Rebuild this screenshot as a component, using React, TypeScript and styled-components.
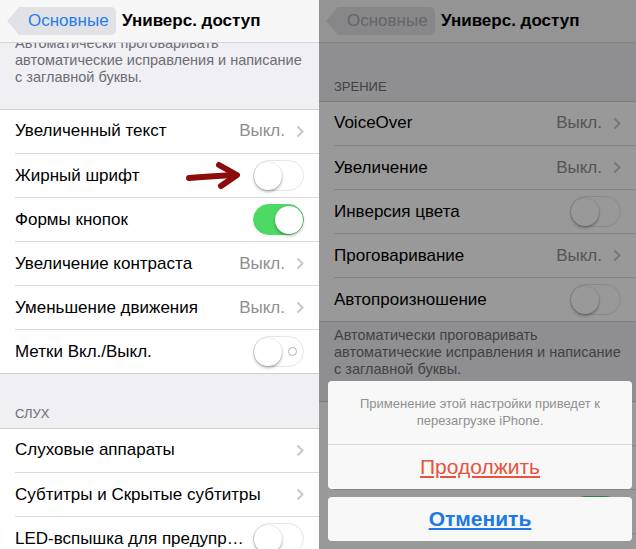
import React from 'react'
import styled, { createGlobalStyle } from 'styled-components'

const GlobalStyle = createGlobalStyle`
  html, body {
    margin: 0;
    padding: 0;
    background: #ffffff;
  }
  body {
    font-family: "Liberation Sans", Arial, sans-serif;
  }
`

type Cell =
  | { label: string; kind: 'detail'; value?: string }
  | { label: string; kind: 'toggle'; on?: boolean; labels?: boolean; arrow?: boolean }

interface Section {
  header?: string
  headerTop?: number
  cells: Cell[]
  footer?: string[]
}

const sections: Section[] = [
  {
    header: 'ЗРЕНИЕ',
    headerTop: 36,
    cells: [
      { label: 'VoiceOver', kind: 'detail', value: 'Выкл.' },
      { label: 'Увеличение', kind: 'detail', value: 'Выкл.' },
      { label: 'Инверсия цвета', kind: 'toggle' },
      { label: 'Проговаривание', kind: 'detail', value: 'Выкл.' },
      { label: 'Автопроизношение', kind: 'toggle' },
    ],
    footer: ['Автоматически проговаривать', 'автоматические исправления и написание', 'с заглавной буквы.'],
  },
  {
    cells: [
      { label: 'Увеличенный текст', kind: 'detail', value: 'Выкл.' },
      { label: 'Жирный шрифт', kind: 'toggle', arrow: true },
      { label: 'Формы кнопок', kind: 'toggle', on: true },
      { label: 'Увеличение контраста', kind: 'detail', value: 'Выкл.' },
      { label: 'Уменьшение движения', kind: 'detail', value: 'Выкл.' },
      { label: 'Метки Вкл./Выкл.', kind: 'toggle', labels: true },
    ],
  },
  {
    header: 'СЛУХ',
    headerTop: 32,
    cells: [
      { label: 'Слуховые аппараты', kind: 'detail' },
      { label: 'Субтитры и Скрытые субтитры', kind: 'detail' },
      { label: 'LED-вспышка для предупр…', kind: 'toggle' },
    ],
  },
]

const Chevron = () => (
  <svg width="8" height="13" viewBox="0 0 8 13">
    <polyline points="1.5,1.5 6.5,6.5 1.5,11.5" fill="none" stroke="#c7c7cc" strokeWidth="2" />
  </svg>
)

const RedArrow = () => (
  <ArrowSvg width="56" height="30" viewBox="0 0 56 30">
    <path d="M3 17 Q 22 15.5 48 14" fill="none" stroke="#8c0c0c" strokeWidth="6" strokeLinecap="round" />
    <path d="M33 4 L51 14 L35 25" fill="none" stroke="#8c0c0c" strokeWidth="6" strokeLinecap="round" strokeLinejoin="round" />
  </ArrowSvg>
)

const Toggle = ({ on, labels }: { on?: boolean; labels?: boolean }) => (
  <Track $on={on}>
    <Knob />
    {labels && <OffMark />}
  </Track>
)

const SettingsList = ({ offset, annotate }: { offset: number; annotate?: boolean }) => (
  <Content style={{ marginTop: offset }}>
    {sections.map((section, i) => (
      <div key={i}>
        {section.header && <SectionHeader $top={section.headerTop || 30}>{section.header}</SectionHeader>}
        <Group>
          {section.cells.map((cell) => (
            <Row key={cell.label}>
              <Label>{cell.label}</Label>
              {cell.kind === 'detail' ? (
                <>
                  {cell.value && <Detail>{cell.value}</Detail>}
                  <Chevron />
                </>
              ) : (
                <>
                  {annotate && cell.arrow && <RedArrow />}
                  <Toggle on={cell.on} labels={cell.labels} />
                </>
              )}
            </Row>
          ))}
        </Group>
        {section.footer && (
          <Footer>
            {section.footer.map((line) => (
              <div key={line}>{line}</div>
            ))}
          </Footer>
        )}
      </div>
    ))}
  </Content>
)

const NavigationBar = ({ dimmed }: { dimmed?: boolean }) => (
  <NavBar>
    <BackButton $dimmed={dimmed}>Основные</BackButton>
    <Title>Универс. доступ</Title>
  </NavBar>
)

const App = () => {
  return (
    <Page>
      <GlobalStyle />
      <Screen $width={319}>
        <NavigationBar />
        <Scroll>
          <SettingsList offset={-292} annotate />
        </Scroll>
      </Screen>
      <Screen $width={317}>
        <NavigationBar dimmed />
        <Scroll>
          <SettingsList offset={0} />
        </Scroll>
        <Dim />
        <Sheet>
          <SheetCard>
            <SheetMessage>
              Применение этой настройки приведет к
              <br />
              перезагрузке iPhone.
            </SheetMessage>
            <SheetButton $color="#e8533f">Продолжить</SheetButton>
          </SheetCard>
          <SheetCard>
            <SheetButton $color="#1b7ae6" $bold>Отменить</SheetButton>
          </SheetCard>
        </Sheet>
      </Screen>
    </Page>
  )
}

export default App

const Page = styled.div`
  display: flex;
  width: 636px;
  height: 549px;
  overflow: hidden;
`

const Screen = styled.div<{ $width: number }>`
  position: relative;
  display: flex;
  flex-direction: column;
  width: ${(p) => p.$width}px;
  height: 549px;
  flex-shrink: 0;
  overflow: hidden;
  background: #efeff4;
`

const NavBar = styled.div`
  display: flex;
  align-items: center;
  height: 42px;
  border-bottom: 1px solid #d6d6da;
  background: #f7f7f8;
  flex-shrink: 0;
  position: relative;
  z-index: 1;
`

const BackButton = styled.div<{ $dimmed?: boolean }>`
  display: flex;
  align-items: center;
  box-sizing: border-box;
  height: 28px;
  width: 109px;
  margin-left: 7px;
  padding-left: 21px;
  border-radius: 5px;
  background: #e2e2e6;
  clip-path: polygon(0 50%, 12px 0, 100% 0, 100% 100%, 12px 100%);
  font-size: 17px;
  color: ${(p) => (p.$dimmed ? '#a9a9ab' : '#1f7fe8')};
`

const Title = styled.div`
  margin-left: 6px;
  font-size: 17px;
  font-weight: bold;
  color: #000;
`

const Scroll = styled.div`
  flex: 1;
  overflow: hidden;
`

const Content = styled.div``

const SectionHeader = styled.div<{ $top: number }>`
  padding: ${(p) => p.$top}px 15px 6px;
  font-size: 13px;
  line-height: 16px;
  color: #6d6d72;
`

const Group = styled.div`
  background: #ffffff;
  border-bottom: 1px solid #cfced3;
  box-shadow: inset 0 1px 0 #cfced3;
`

const Row = styled.div`
  display: flex;
  align-items: center;
  box-sizing: border-box;
  height: 44px;
  margin-left: 15px;
  padding-right: 15px;

  & + & {
    border-top: 1px solid #dcdce0;
  }
`

const Label = styled.div`
  flex: 1;
  min-width: 0;
  font-size: 17px;
  color: #000;
  white-space: nowrap;
  overflow: hidden;
`

const Detail = styled.div`
  margin-right: 11px;
  font-size: 17px;
  color: #8e8e93;
`

const ArrowSvg = styled.svg`
  margin-right: 11px;
  flex-shrink: 0;
`

const Track = styled.div<{ $on?: boolean }>`
  display: flex;
  align-items: center;
  justify-content: ${(p) => (p.$on ? 'flex-end' : 'space-between')};
  box-sizing: border-box;
  width: 51px;
  height: 31px;
  padding-right: ${(p) => (p.$on ? '0' : '6px')};
  border-radius: 16px;
  flex-shrink: 0;
  background: ${(p) => (p.$on ? '#4cd964' : '#ffffff')};
  border: 1.5px solid ${(p) => (p.$on ? '#4cd964' : '#e5e5ea')};
`

const Knob = styled.span`
  width: 28px;
  height: 28px;
  border-radius: 50%;
  background: #ffffff;
  box-shadow: 0 2px 3px rgba(0, 0, 0, 0.28), 0 0 0 0.5px rgba(0, 0, 0, 0.12);
`

const OffMark = styled.span`
  width: 7px;
  height: 7px;
  border-radius: 50%;
  border: 1.5px solid #b4b4b8;
`

const Footer = styled.div`
  padding: 5px 15px 23px;
  font-size: 14.5px;
  line-height: 17px;
  color: #6d6d72;
  white-space: nowrap;
`

const Dim = styled.div`
  position: absolute;
  inset: 0;
  z-index: 2;
  background: rgba(0, 0, 0, 0.4);
`

const Sheet = styled.div`
  position: absolute;
  left: 9px;
  right: 4px;
  bottom: 8px;
  z-index: 3;
  display: flex;
  flex-direction: column;
  gap: 8px;
`

const SheetCard = styled.div`
  border-radius: 4px;
  background: #f8f8f8;
  overflow: hidden;
`

const SheetMessage = styled.div`
  box-sizing: border-box;
  height: 64px;
  padding-top: 14px;
  border-bottom: 1px solid #dcdcdc;
  text-align: center;
  font-size: 13px;
  line-height: 17px;
  color: #8f8f8f;
`

const SheetButton = styled.div<{ $color: string; $bold?: boolean }>`
  display: flex;
  align-items: center;
  justify-content: center;
  height: 44px;
  font-size: 21px;
  font-weight: ${(p) => (p.$bold ? 'bold' : 'normal')};
  color: ${(p) => p.$color};
  text-decoration: underline;
`
